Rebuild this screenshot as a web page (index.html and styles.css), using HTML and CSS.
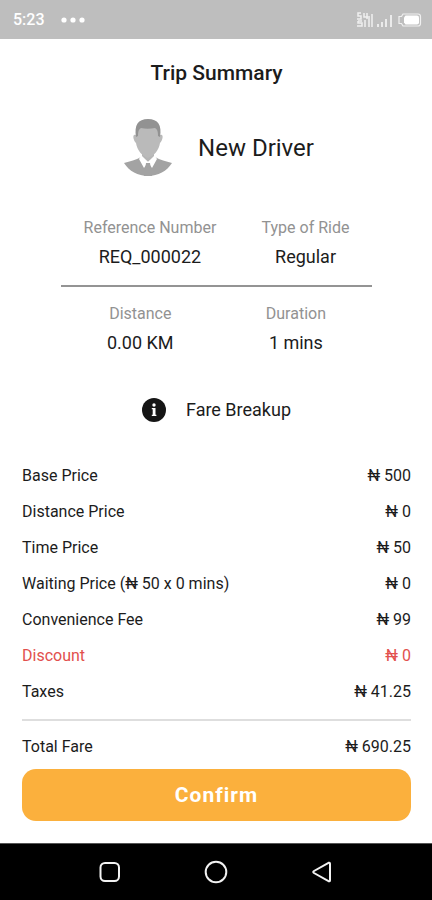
FILE: index.html
```html
<!DOCTYPE html>
<html lang="en">
<head>
<meta charset="utf-8">
<meta name="viewport" content="width=device-width, initial-scale=1">
<title>Trip Summary</title>
<link rel="stylesheet" href="styles.css">
</head>
<body>
<header class="status">
  <div class="status-left">
    <span>5:23</span>
    <svg width="24" height="6" viewBox="0 0 24 6" fill="#fff" aria-hidden="true"><circle cx="3" cy="3" r="2.6"/><circle cx="12" cy="3" r="2.6"/><circle cx="21" cy="3" r="2.6"/></svg>
  </div>
  <svg width="66" height="18" viewBox="0 0 66 18" fill="none" stroke="#f0f0f0" aria-hidden="true">
    <path d="M5 2H2v3h3v3H1M8 2v4h4M11 2v6M2 10h4M2 10v2h4v3H1M9 9v7M13 5v11M16 3v13" stroke-width="1.5"/>
    <path d="M22 13v3M26 11v5M30 8v8M35 4v12" stroke-width="1.8"/>
    <path d="M47 3h15q2.500 0 2.500 2.500v7q0 2.500-2.500 2.500H47l-1.500-2.500h-2.500v-7h2.500z" stroke-width="1.200"/>
    <path d="M49.500 4.500H61q2 0 2 2v5q0 2-2 2H49.500l-1.500-2v-5z" fill="#fff" stroke="none"/>
  </svg>
</header>
<main class="summary">
  <h1 class="title">Trip Summary</h1>
  <section class="driver">
    <svg class="avatar" width="50" height="60" viewBox="0 0 50 60" aria-hidden="true">
      <path d="M1 45c6-2 12-3 17-6h14c5 3 11 4 17 6-5 8-14 13-24 13S6 53 1 45z" fill="#a3a3a3"/>
      <path d="M18 37l1 5 6 8 6-8 1-5z" fill="#fff"/>
      <path d="M19 31v7l6 6 6-6v-7z" fill="#b5b5b5"/>
      <path d="M18 38l7 6-4 6-5-9zM32 38l-7 6 4 6 5-9z" fill="#fff"/>
      <path d="M23 45h4l2 13h-8z" fill="#a3a3a3"/>
      <path d="M13 17c-4-2-3 5 0 8 1 7 6 13 12 15 6-2 11-8 12-15 3-3 4-10 0-8l-2-8H15z" fill="#bababa"/>
      <path d="M13 19C11 7 15 1 25 1s14 6 12 18l-2-1c0-5-1-7-3-8-5 1-10 1-14 0-2 1-3 3-3 8z" fill="#929292"/>
    </svg>
    <span class="driver-name">New Driver</span>
  </section>
  <dl class="details">
    <div class="detail-row">
      <div class="detail"><dt>Reference Number</dt><dd>REQ_000022</dd></div>
      <div class="detail"><dt>Type of Ride</dt><dd>Regular</dd></div>
    </div>
    <div class="detail-row">
      <div class="detail"><dt>Distance</dt><dd>0.00 KM</dd></div>
      <div class="detail"><dt>Duration</dt><dd>1 mins</dd></div>
    </div>
  </dl>
  <h2 class="breakup">
    <svg width="24" height="24" viewBox="0 0 24 24" aria-hidden="true"><circle cx="12" cy="12" r="12" fill="#151515"/><circle cx="12" cy="7" r="1.700" fill="#fff"/><path d="M9.800 10h3.700v6.800h.900V18H9.800v-1.200h.900v-5.600h-.900z" fill="#fff"/></svg>
    <span>Fare Breakup</span>
  </h2>
  <table class="fares">
    <tbody>
      <tr><th scope="row">Base Price</th><td>₦ 500</td></tr>
      <tr><th scope="row">Distance Price</th><td>₦ 0</td></tr>
      <tr><th scope="row">Time Price</th><td>₦ 50</td></tr>
      <tr><th scope="row">Waiting Price (₦ 50 x 0 mins)</th><td>₦ 0</td></tr>
      <tr><th scope="row">Convenience Fee</th><td>₦ 99</td></tr>
      <tr class="discount"><th scope="row">Discount</th><td>₦ 0</td></tr>
      <tr><th scope="row">Taxes</th><td>₦ 41.25</td></tr>
    </tbody>
  </table>
  <div class="total"><span>Total Fare</span><span>₦ 690.25</span></div>
  <button class="confirm" type="button">Confirm</button>
</main>
<nav class="navbar" aria-label="System">
  <button type="button" aria-label="Recent apps"><svg width="24" height="24" viewBox="0 0 24 24"><rect x="2.500" y="3" width="18.500" height="18" rx="4.500"/></svg></button>
  <button type="button" aria-label="Home"><svg width="24" height="24" viewBox="0 0 24 24"><circle cx="12" cy="12" r="10.300"/></svg></button>
  <button type="button" aria-label="Back"><svg width="24" height="24" viewBox="0 0 24 24"><path d="M18.500 2.800 4 11q-1.500 1 0 2l14.500 8.200q1.500.600 1.500-1V3.800q0-1.600-1.500-1z"/></svg></button>
</nav>
</body>
</html>
```

FILE: styles.css
```css
* {
  box-sizing: border-box;
}

body {
  margin: 0;
  min-height: 100vh;
  display: flex;
  flex-direction: column;
  background: #fff;
  color: #1c1c1c;
  font-family: Roboto, "Liberation Sans", sans-serif;
  font-size: 16px;
}

.status {
  display: flex;
  align-items: center;
  justify-content: space-between;
  padding: 10px 10px 10px 13px;
  background: #bebebe;
  color: #fff;
  line-height: 19px;
  font-weight: 500;
}

.status-left {
  display: flex;
  align-items: center;
  gap: 16px;
}

.summary {
  flex: 1;
  display: flex;
  flex-direction: column;
  padding: 20px 21px 20px 22px;
}

.title {
  margin: 0;
  font-size: 21px;
  font-weight: 500;
  line-height: 28px;
  text-align: center;
}

.driver {
  display: flex;
  align-items: center;
  justify-content: center;
  gap: 25px;
  margin-top: 31px;
  padding-left: 4px;
}

.driver-name {
  font-size: 24px;
  line-height: 28px;
}

.details {
  width: 80%;
  margin: 36px auto 0;
}

.detail-row {
  display: flex;
  justify-content: space-around;
}

.detail-row + .detail-row {
  margin-top: 13px;
  padding-top: 13px;
  border-top: 2px solid #949494;
}

.detail {
  text-align: center;
}

.detail dt {
  color: #929292;
  font-size: 16px;
  line-height: 28px;
}

.detail dd {
  margin: 0;
  font-size: 18px;
  line-height: 30px;
}

.breakup {
  display: flex;
  align-items: center;
  justify-content: center;
  gap: 20px;
  margin: 38px 0 34px;
  font-size: 18px;
  font-weight: 400;
  line-height: 28px;
}

.fares {
  width: 100%;
  border-collapse: collapse;
  line-height: 36px;
}

.fares th,
.fares td {
  padding: 0;
  font-weight: 400;
  text-align: left;
}

.fares td {
  text-align: right;
}

.fares .discount {
  color: #e2504d;
}

.total {
  display: flex;
  justify-content: space-between;
  margin-top: 9px;
  padding: 8px 0 4px;
  border-top: 2px solid #dedede;
  line-height: 36px;
}

.confirm {
  height: 52px;
  border: 0;
  border-radius: 14px;
  background: #fbb03d;
  color: #fff;
  font: 700 21px/28px Roboto, "Liberation Sans", sans-serif;
  letter-spacing: 1px;
}

.navbar {
  display: flex;
  justify-content: space-evenly;
  align-items: center;
  height: 57px;
  border-top: 1px solid #555;
  padding: 0 16px;
  background: #000;
}

.navbar button {
  display: flex;
  padding: 0;
  border: 0;
  background: none;
}

.navbar svg {
  fill: none;
  stroke: #f2f2f2;
  stroke-width: 2;
}
```
